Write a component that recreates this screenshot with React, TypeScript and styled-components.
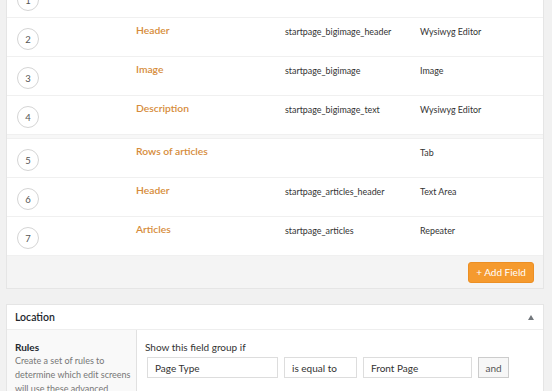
import styled, { createGlobalStyle } from "styled-components";

const GlobalStyle = createGlobalStyle`
  body {
    margin: 0;
    background: #f1f1f1;
    font-family: Lato, "Open Sans", sans-serif;
    color: #333;
    overflow: hidden;
  }
`;

const Page = styled.div`
  margin-top: -22px;
  padding: 0 8px 0 6px;
`;

const FieldsBox = styled.div`
  background: #fff;
  border: 1px solid #e5e5e5;
`;

const Row = styled.div`
  display: grid;
  grid-template-columns: 129px 149px 135px 1fr;
  height: 38px;
  border-bottom: 1px solid #f0f0f0;
`;

const OrderCell = styled.div`
  padding: 10px 0 0 10px;
`;

const Badge = styled.span`
  display: flex;
  align-items: center;
  justify-content: center;
  width: 20px;
  height: 20px;
  border: 1px solid #d5d5d5;
  border-radius: 50%;
  font-size: 9.5px;
  color: #555;
`;

const Label = styled.div`
  padding-top: 6px;
  font-size: 10.3px;
  font-weight: 600;
  color: #d68c3a;
`;

const Meta = styled.div`
  padding-top: 8px;
  font-size: 8.9px;
  color: #333;
`;

const Band = styled.div`
  height: 3px;
  background: #f7f7f7;
  border-bottom: 1px solid #f0f0f0;
`;

const Footer = styled.div`
  display: flex;
  justify-content: flex-end;
  align-items: center;
  height: 32px;
  padding-right: 9px;
  background: #f4f4f4;
`;

const AddButton = styled.button`
  width: 66px;
  height: 21px;
  border: 1px solid #ec8f24;
  border-radius: 3px;
  background: #f59a2e;
  color: #fff;
  font-family: inherit;
  font-size: 10px;
  padding: 0;
`;

const LocationBox = styled.div`
  margin-top: 15px;
  background: #fff;
  border: 1px solid #e5e5e5;
`;

const BoxHeader = styled.div`
  display: flex;
  align-items: center;
  justify-content: space-between;
  height: 24px;
  padding: 0 9px 0 8px;
  border-bottom: 1px solid #eee;
  font-size: 10.5px;
  font-weight: 600;
  color: #23282d;
`;

const Caret = styled.span`
  width: 0;
  height: 0;
  border-left: 3px solid transparent;
  border-right: 3px solid transparent;
  border-bottom: 5px solid #72777c;
`;

const BoxBody = styled.div`
  display: grid;
  grid-template-columns: 130px 1fr;
  height: 70px;
`;

const RulesSide = styled.div`
  background: #f9f9f9;
  border-right: 1px solid #e1e1e1;
  padding: 10px 2px 0 8px;
`;

const RulesTitle = styled.div`
  font-size: 10px;
  font-weight: 700;
  color: #23282d;
  line-height: 14px;
`;

const RulesText = styled.div`
  font-size: 9px;
  color: #777;
  line-height: 14px;
`;

const RulesMain = styled.div`
  padding: 10px 8px;
`;

const Lead = styled.div`
  font-size: 10px;
  color: #333;
  line-height: 14px;
`;

const RuleLine = styled.div`
  display: flex;
  gap: 6px;
  margin-top: 3px;
  margin-left: 2px;
`;

const Field = styled.div<{ $w: number }>`
  width: ${(p) => p.$w}px;
  height: 21px;
  box-sizing: border-box;
  border: 1px solid #ddd;
  padding: 0 7px;
  display: flex;
  align-items: center;
  font-size: 10px;
  color: #333;
`;

const AndButton = styled.div`
  width: 31px;
  height: 21px;
  box-sizing: border-box;
  border: 1px solid #ccc;
  background: #f7f7f7;
  display: flex;
  align-items: center;
  justify-content: center;
  font-size: 10px;
  color: #555;
`;

const fields = [
  { n: 1, label: "Big image", key: "", type: "Tab" },
  { n: 2, label: "Header", key: "startpage_bigimage_header", type: "Wysiwyg Editor" },
  { n: 3, label: "Image", key: "startpage_bigimage", type: "Image" },
  { n: 4, label: "Description", key: "startpage_bigimage_text", type: "Wysiwyg Editor" },
  { n: 5, label: "Rows of articles", key: "", type: "Tab" },
  { n: 6, label: "Header", key: "startpage_articles_header", type: "Text Area" },
  { n: 7, label: "Articles", key: "startpage_articles", type: "Repeater" },
];

const FieldRow = ({ f }: { f: (typeof fields)[number] }) => (
  <Row>
    <OrderCell>
      <Badge>{f.n}</Badge>
    </OrderCell>
    <Label>{f.label}</Label>
    <Meta>{f.key}</Meta>
    <Meta>{f.type}</Meta>
  </Row>
);

export default function App() {
  return (
    <Page>
      <GlobalStyle />
      <FieldsBox>
        {fields.slice(0, 4).map((f) => (
          <FieldRow key={f.n} f={f} />
        ))}
        <Band />
        {fields.slice(4).map((f) => (
          <FieldRow key={f.n} f={f} />
        ))}
        <Footer>
          <AddButton>+ Add Field</AddButton>
        </Footer>
      </FieldsBox>

      <LocationBox>
        <BoxHeader>
          <span>Location</span>
          <Caret />
        </BoxHeader>
        <BoxBody>
          <RulesSide>
            <RulesTitle>Rules</RulesTitle>
            <RulesText>
              Create a set of rules to determine which edit screens will use
              these advanced custom fields
            </RulesText>
          </RulesSide>
          <RulesMain>
            <Lead>Show this field group if</Lead>
            <RuleLine>
              <Field $w={131}>Page Type</Field>
              <Field $w={73}>is equal to</Field>
              <Field $w={109}>Front Page</Field>
              <AndButton>and</AndButton>
            </RuleLine>
          </RulesMain>
        </BoxBody>
      </LocationBox>
    </Page>
  );
}
